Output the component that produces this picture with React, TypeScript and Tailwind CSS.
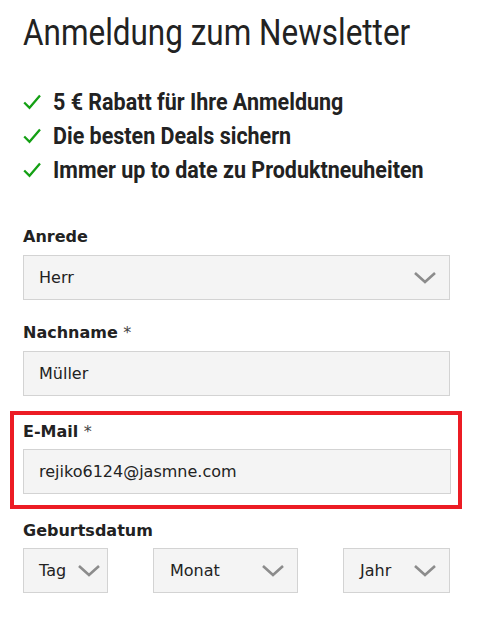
import React from "react";

const Chevron = () => (
  <svg width="24" height="14" viewBox="0 0 24 14" className="shrink-0">
    <path d="M2 2 L12 11 L22 2" fill="none" stroke="#8c8c8c" strokeWidth="2.6" />
  </svg>
);

const Check = () => (
  <svg width="18" height="16" viewBox="0 0 18 16" className="shrink-0">
    <path d="M1.2 8.5 L6.5 13.8 L17 1.5" fill="none" stroke="#14a014" strokeWidth="2.3" />
  </svg>
);

const label = "text-[16px] leading-[24px] font-bold text-[#222]";
const field =
  "h-[45px] border border-[#d3d3d3] bg-[#f4f4f4] flex items-center text-[16px] text-[#222]";

export default function App() {
  return (
    <div
      className="w-[478px] h-[618px] bg-white pl-[23px] pt-[9px]"
      style={{ fontFamily: "'DejaVu Sans', sans-serif" }}
    >
      <h1
        className="text-[37px] leading-[48px] font-normal text-[#222] origin-left scale-x-[0.85] whitespace-nowrap"
        style={{ fontFamily: "Roboto, sans-serif" }}
      >
        Anmeldung zum Newsletter
      </h1>
      <ul
        className="mt-[28px] flex flex-col text-[24px] leading-[34px] font-bold text-[#222]"
        style={{ fontFamily: "Roboto, sans-serif" }}
      >
        {[
          "5 € Rabatt für Ihre Anmeldung",
          "Die besten Deals sichern",
          "Immer up to date zu Produktneuheiten",
        ].map((t) => (
          <li key={t} className="flex items-center gap-[12px]">
            <Check />
            <span className="origin-left scale-x-[0.895] whitespace-nowrap">{t}</span>
          </li>
        ))}
      </ul>

      <div className="mt-[38px] w-[427px]">
        <div className={label}>Anrede</div>
        <div className={`${field} mt-[6px] pl-[15px] pr-[12px] justify-between`}>
          <span>Herr</span>
          <Chevron />
        </div>

        <div className={`${label} mt-[21px]`}>
          Nachname <span className="font-normal text-[#444]">*</span>
        </div>
        <div className={`${field} mt-[6px] pl-[15px]`}>Müller</div>

        <div className="mt-[15px] -ml-[13px] w-[452px] border-[4px] border-[#ec1c24] pl-[9px] pr-[7px] pt-[5px] pb-[11px]">
          <div className={label}>
            E-Mail <span className="font-normal text-[#444]">*</span>
          </div>
          <div className={`${field} mt-[5px] pl-[15px]`}>rejiko6124@jasmne.com</div>
        </div>

        <div className={`${label} mt-[10px]`}>Geburtsdatum</div>
        <div className="mt-[5px] flex justify-between">
          <div className={`${field} w-[85px] pl-[15px] pr-[6px] justify-between`}>
            <span>Tag</span>
            <Chevron />
          </div>
          <div className={`${field} w-[145px] pl-[16px] pr-[12px] justify-between`}>
            <span>Monat</span>
            <Chevron />
          </div>
          <div className={`${field} w-[107px] pl-[16px] pr-[12px] justify-between`}>
            <span>Jahr</span>
            <Chevron />
          </div>
        </div>
      </div>
    </div>
  );
}
